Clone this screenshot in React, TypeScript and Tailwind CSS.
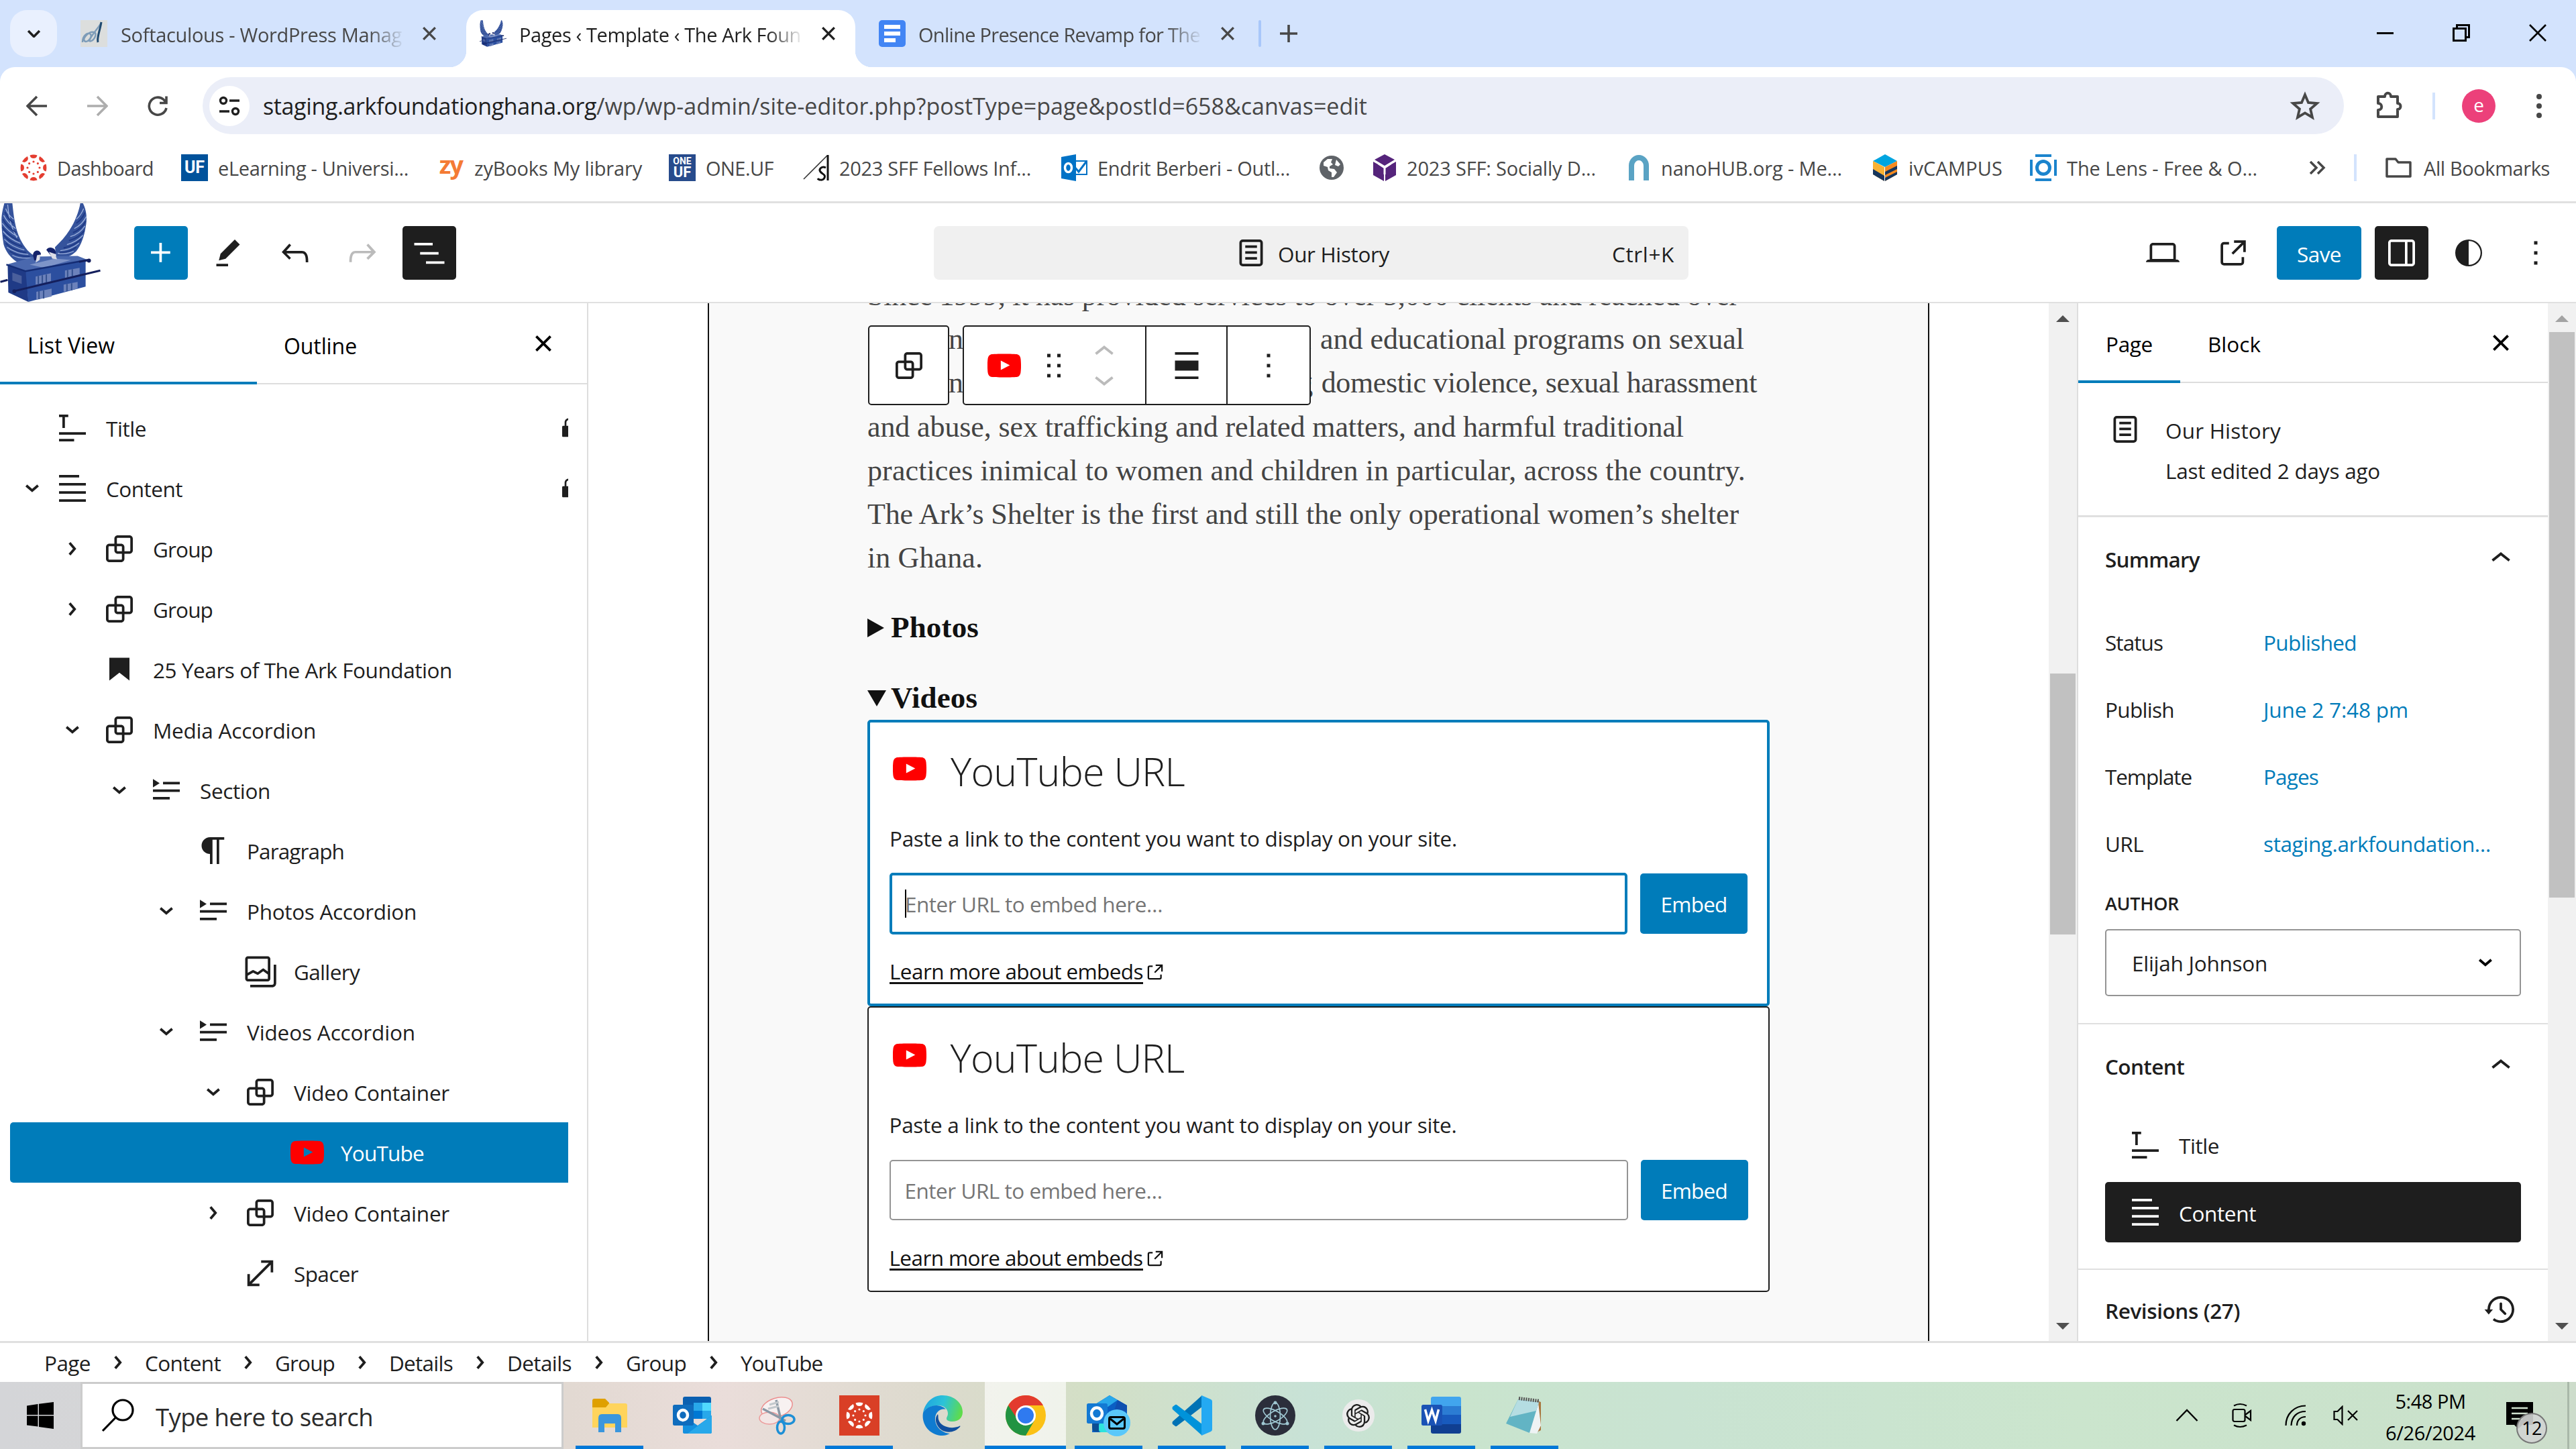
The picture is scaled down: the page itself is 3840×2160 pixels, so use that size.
import { useLayoutEffect, useRef, useState, type ReactNode } from "react";
import { SiOpenai } from "react-icons/si";

/* Text set to an exact measure: the tracking is worked out from the natural width. */
function Fit({ w, children, className = "", serif = false }: { w: number; children: string; className?: string; serif?: boolean }) {
  const ref = useRef<HTMLSpanElement>(null);
  const [ls, setLs] = useState(0);
  useLayoutEffect(() => {
    const el = ref.current;
    if (!el) return;
    const natural = el.getBoundingClientRect().width;
    setLs((w - natural) / children.length);
  }, [w, children]);
  return (
    <span className={"block shrink-0 whitespace-pre " + className} style={{ width: w }}>
      <span ref={ref} className={serif ? "inline-block" : "inline-block translate-y-px"} style={{ letterSpacing: ls }}>
        {children}
      </span>
    </span>
  );
}

const P = {
  plus: "M11 12.5V17.5H12.5V12.5H17.5V11H12.5V6H11V11H6V12.5H11Z",
  group:
    "M18 4h-7c-1.1 0-2 .9-2 2v3H6c-1.1 0-2 .9-2 2v7c0 1.1.9 2 2 2h7c1.1 0 2-.9 2-2v-3h3c1.1 0 2-.9 2-2V6c0-1.1-.9-2-2-2zm-4.5 14c0 .3-.2.5-.5.5H6c-.3 0-.5-.2-.5-.5v-7c0-.3.2-.5.5-.5h3V13c0 1.1.9 2 2 2h2.5v3zm0-4.5H11c-.3 0-.5-.2-.5-.5v-2.5H13c.3 0 .5.2.5.5v2.5zm5-.5c0 .3-.2.5-.5.5h-3V11c0-1.1-.9-2-2-2h-2.5V6c0-.3.2-.5.5-.5h7c.3 0 .5.2.5.5v7z",
  edit: "m19 7-3-3-8.5 8.5-1 4 4-1L19 7Zm-7 11.5H5V20h7v-1.5Z",
  undo: "M18.3 11.7c-.6-.6-1.4-.9-2.3-.9H6.7l2.9-3.3-1.1-1-4.5 5L8.5 16l1-1-2.7-2.7H16c.5 0 .9.2 1.3.5 1 1 1 3.4 1 4.5v.3h1.5v-.2c0-1.5 0-4.3-1.5-5.7z",
  redo: "M15.6 6.5l-1.1 1 2.9 3.3H8c-.9 0-1.7.3-2.3.9-1.4 1.5-1.4 4.2-1.4 5.6v.2h1.5v-.3c0-1.1 0-3.5 1-4.5.3-.3.7-.5 1.3-.5h9.2L14.5 15l1.1 1.1 4.6-4.6-4.6-5z",
  list: "M3 6h11v1.5H3V6Zm3.5 5.5h11V13h-11v-1.5ZM21 17H10v1.5h11V17Z",
  page: "M15.5 7.5h-7V9h7V7.5Zm-7 3.5h7v1.5h-7V11Zm7 3.5h-7V16h7v-1.5ZM17 4H7a2 2 0 0 0-2 2v12a2 2 0 0 0 2 2h10a2 2 0 0 0 2-2V6a2 2 0 0 0-2-2ZM7 5.5h10a.5.5 0 0 1 .5.5v12a.5.5 0 0 1-.5.5H7a.5.5 0 0 1-.5-.5V6a.5.5 0 0 1 .5-.5Z",
  desktop:
    "M20.5 16h-.7V8c0-1.1-.9-2-2-2H6.2c-1.1 0-2 .9-2 2v8h-.7c-.8 0-1.5.7-1.5 1.5h20c0-.8-.7-1.5-1.5-1.5zM5.7 8c0-.3.2-.5.5-.5h11.6c.3 0 .5.2.5.5v7.6H5.7V8z",
  external:
    "M19.5 4.5h-7V6h4.44l-5.97 5.97 1.06 1.06L18 7.06v4.44h1.5v-7Zm-13 1a2 2 0 0 0-2 2v10a2 2 0 0 0 2 2h10a2 2 0 0 0 2-2v-3H17v3a.5.5 0 0 1-.5.5h-10a.5.5 0 0 1-.5-.5v-10a.5.5 0 0 1 .5-.5h3V5.5h-3Z",
  drawer:
    "M18 4H6c-1.1 0-2 .9-2 2v12c0 1.1.9 2 2 2h12c1.1 0 2-.9 2-2V6c0-1.1-.9-2-2-2zm-4 14.5H6c-.3 0-.5-.2-.5-.5V6c0-.3.2-.5.5-.5h8v13zm4.5-.5c0 .3-.2.5-.5.5h-2.5v-13H18c.3 0 .5.2.5.5v12z",
  styles: "M20 12a8 8 0 1 1-16 0 8 8 0 0 1 16 0Zm-.9 0a7.1 7.1 0 0 1-7.1 7.1v-14.2a7.1 7.1 0 0 1 7.1 7.1Z",
  more: "M13 19h-2v-2h2v2zm0-6h-2v-2h2v2zm0-6h-2V5h2v2z",
  close:
    "M12 13.06l3.712 3.713 1.061-1.06L13.061 12l3.712-3.712-1.06-1.06L12 10.938 8.288 7.227l-1.061 1.06L10.939 12l-3.712 3.712 1.06 1.061L12 13.061z",
  title: "m4 5.5h2v6.5h1.5v-6.5h2v-1.5h-5.5zm16 10.5h-16v-1.5h16zm-7 4h-9v-1.5h9z",
  content: "M4 20h16v-1.5H4V20zm0-4.8h16v-1.5H4v1.5zm0-6.4v1.5h16V8.8H4zM16 4H4v1.5h12V4z",
  heading: "M6 5V18.6L12 13.85L18 18.6V5H6Z",
  details: "M4 16h10v1.5H4V16Zm0-4.5h16V13H4v-1.5ZM10 7h10v1.5H10V7ZM4 5.25l4 2.5-4 2.5v-5Z",
  paragraph:
    "m9.99609 14v-.2251l.00391.0001v6.225h1.5v-14.5h2.5v14.5h1.5v-14.5h3v-1.5h-8.50391c-2.76142 0-5 2.23858-5 5 0 2.7614 2.23858 5 5 5z",
  gallery:
    "M16.375 4.5H4.625a.125.125 0 0 0-.125.125v8.254l2.859-1.54a.75.75 0 0 1 .68-.016l2.384 1.142 2.89-2.074a.75.75 0 0 1 .874 0l2.313 1.66V4.625a.125.125 0 0 0-.125-.125Zm.125 9.398-2.75-1.975-2.813 2.02a.75.75 0 0 1-.76.067l-2.444-1.17L4.5 14.583v1.792c0 .069.056.125.125.125h11.75a.125.125 0 0 0 .125-.125v-2.477ZM4.625 3C3.728 3 3 3.728 3 4.625v11.75C3 17.273 3.728 18 4.625 18h11.75c.898 0 1.625-.727 1.625-1.625V4.625C18 3.728 17.273 3 16.375 3H4.625ZM20 8v11c0 .69-.31 1-.999 1H6v1.5h13.001c1.52 0 2.499-.982 2.499-2.5V8H20Z",
  spacer: "M12.5 4.3v1.5h4.6L5.8 17.1V12.5H4.3v7.2h7.2v-1.5H6.9L18.2 6.9v4.6h1.5V4.3z",
  lock: "M17 10h-1.2V7c0-2.1-1.7-3.8-3.8-3.8-2.1 0-3.8 1.7-3.8 3.8v3H7c-.6 0-1 .4-1 1v8c0 .6.4 1 1 1h10c.6 0 1-.4 1-1v-8c0-.6-.4-1-1-1zm-2.8 0H9.8V7c0-1.2 1-2.2 2.2-2.2s2.2 1 2.2 2.2v3z",
  youtube:
    "M21.8 8s-.195-1.377-.795-1.984c-.76-.797-1.613-.8-2.004-.847-2.798-.203-6.996-.203-6.996-.203h-.01s-4.197 0-6.996.202c-.39.046-1.242.05-2.003.846C2.395 6.623 2.2 8 2.2 8S2 9.62 2 11.24v1.517c0 1.618.2 3.237.2 3.237s.195 1.378.795 1.985c.76.797 1.76.77 2.205.855 1.6.153 6.8.2 6.8.2s4.203-.005 7-.208c.392-.047 1.244-.05 2.005-.847.6-.607.795-1.985.795-1.985s.2-1.618.2-3.237v-1.517C22 9.62 21.8 8 21.8 8zM9.935 14.595v-5.62l5.403 2.82-5.403 2.8z",
  drag: "M8 7h2V5H8v2zm0 6h2v-2H8v2zm0 6h2v-2H8v2zm6-14v2h2V5h-2zm0 8h2v-2h-2v2zm0 6h2v-2h-2v2z",
  up: "M6.5 12.4L12 8l5.5 4.4-.9 1.2L12 10l-4.5 3.6-1-1.2z",
  down: "M17.5 11.6L12 16l-5.5-4.4.9-1.2L12 14l4.5-3.6 1 1.2z",
  right:
    "M10.8622 8.04053L14.2805 12.0286L10.8622 16.0167L9.72327 15.0405L12.3049 12.0286L9.72327 9.01672L10.8622 8.04053Z",
  align: "M19 5.5H5V4h14v1.5ZM19 20H5v-1.5h14V20ZM5 9h14v6H5V9Z",
  history:
    "M5.5 12h1.75l-2.5 3-2.5-3H4a8 8 0 113.134 6.35l.907-1.194A6.5 6.5 0 105.5 12zm9.53 1.97l-2.28-2.28V8.5a.75.75 0 00-1.5 0V12a.747.747 0 00.218.529l2.502 2.502a.75.75 0 101.06-1.061z",
};

function Ic({ n, className = "size-[60px]" }: { n: keyof typeof P; className?: string }) {
  return (
    <svg viewBox="0 0 24 24" className={"shrink-0 fill-current " + className}>
      <path fillRule="evenodd" d={P[n]} />
    </svg>
  );
}

function Sv({ vb, className = "", children }: { vb: string; className?: string; children: ReactNode }) {
  return (
    <svg viewBox={vb} fill="none" className={"shrink-0 " + className}>
      {children}
    </svg>
  );
}

const leftWing = "M6 0C4 8 1 18 2 30C2 44 4 54 5 62C8 72 14 80 22 86C30 92 42 91 52 90L54 80C44 76 36 66 30 54C22 38 20 18 18 0Z";
const rightWing = "M120 0C118 12 112 28 104 40C98 50 90 58 82 66L84 82C94 84 106 80 114 72C122 62 126 48 128 36C131 22 129 10 124 0Z";

function Ark({ className }: { className: string }) {
  return (
    <Sv vb="0 0 150 148" className={className}>
      <path d={leftWing} fill="#35539c" />
      <path d={rightWing} fill="#35539c" />
      <g stroke="#9fb2dd" strokeWidth="1.300">
        <path d="M8 8q4 10 12 16M5 18q6 12 18 20M3 30q8 12 23 20M4 42q10 12 26 18M6 54q12 12 30 16M10 66q14 10 32 11M18 78q12 6 30 4M11 2q2 30 14 50" />
        <path d="M125 8q-4 10-11 16M129 20q-6 12-18 18M127 34q-8 12-22 16M124 48q-10 10-24 14M118 60q-12 10-28 11M110 72q-10 5-24 3" />
      </g>
      <g stroke="#1f3a86" strokeWidth="2">
        <path d="M7 13q4 10 13 17M4 24q6 12 20 20M3 36q8 12 25 20M5 48q10 12 28 17M8 60q12 12 31 14M14 72q12 8 30 8" />
        <path d="M127 14q-4 10-13 16M128 27q-6 12-19 17M126 41q-8 11-23 15M121 54q-10 10-26 13M114 66q-10 8-25 8" />
      </g>
      <path d="M9 92L52 80L116 79L134 86L72 104L38 102Z" fill="#4a68ae" />
      <path d="M44 92l38-9 24 2-40 12z" fill="#7e94c8" />
      <path d="M11 93L40 102L42 148L12 134Z" fill="#1f3a86" />
      <path d="M38 102L128 85V125L42 148Z" fill="#2c4f9f" />
      <path d="M9 92L38 102L131 85" stroke="#142c74" strokeWidth="2.500" />
      <path d="M18 104l14 5v12l-14-5z" fill="#4a5f9c" />
      <path d="M53 110l23-5v12l-23 5zM97 101l22-4v10l-22 5zM54 133l23-5v12l-23 5zM95 122l21-4v10l-21 5z" fill="#6c82bb" />
      <path d="M57 109v12M63 108v12M69 107v12M101 100v11M108 99v11M58 132v12M65 131v12M100 121v11M107 120v11" stroke="#33508f" strokeWidth="2" />
      <path d="M0 118L11 115M20 132L150 101M118 88L133 85" stroke="#141f5c" strokeWidth="3" />
      <circle cx="133" cy="86" r="3" fill="#141f5c" />
      <circle cx="21" cy="132" r="3" fill="#141f5c" />
      <path d="M49 78c0-8 10-10 12-2l-4 8-6 2zM69 70c4-7 16-3 14 6l-6 4z" fill="#15236b" />
      <path d="M55 78l5-1-1 8-6 4zM73 73l9 3 3 8-7-1z" fill="#dcdde6" />
    </Sv>
  );
}

function X({ className = "size-[22px]" }: { className?: string }) {
  return (
    <Sv vb="0 0 20 20" className={className}>
      <path d="M2 2L18 18M18 2L2 18" stroke="currentColor" strokeWidth="3" />
    </Sv>
  );
}

function TabTitle({ w, children }: { w: number; children: string }) {
  return (
    <div className="w-[420px] shrink-0 [mask-image:linear-gradient(to_right,black_88%,transparent_101%)]">
      <Fit w={w} className="pt-[2px]">{children}</Fit>
    </div>
  );
}

function TabStrip() {
  return (
    <div className="flex h-[100px] items-start bg-[#d3e3fd] pl-[15px] pt-[15px] text-[29px] leading-[70px]">
      <div className="flex size-[70px] items-center justify-center rounded-[25px] bg-[#e9f0fe]">
        <Sv vb="0 0 20 12" className="w-[21px] text-[#1f1f1f]">
          <path d="M2 2l8 8 8-8" stroke="currentColor" strokeWidth="3.4" />
        </Sv>
      </div>
      <div className="flex h-[70px] w-[610px] items-center pl-[35px] text-[#474747]">
        <Sv vb="0 0 40 40" className="size-[40px]">
          <rect width="40" height="40" fill="#dcdedd" />
          <path d="M3 33C3 22 12 17 15 21S10 35 6 31 13 16 20 18 18 34 13 31C17 20 29 10 31 3" stroke="#7d9cb8" strokeWidth="2.500" />
          <path d="M31 3C29 16 24 26 26 33" stroke="#1f4a70" strokeWidth="3" />
        </Sv>
        <div className="w-[20px]" />
        <TabTitle w={419}>Softaculous - WordPress Manag</TabTitle>
        <X className="ml-[29px] size-[22px]" />
      </div>
      <div className="flex h-[85px] items-end">
        <div className="size-[25px] -ml-[25px] bg-white [mask-image:radial-gradient(circle_at_0_0,transparent_25px,black_25.5px)]" />
        <div className="flex h-[85px] w-[580px] items-start rounded-t-[25px] bg-white pl-[20px] text-[#1f1f1f]">
          <div className="flex h-[70px] items-center">
            <Ark className="size-[40px]" />
            <div className="w-[19px]" />
            <TabTitle w={420}>Pages ‹ Template ‹ The Ark Foun</TabTitle>
            <X className="ml-[30px] size-[22px]" />
          </div>
        </div>
        <div className="size-[25px] bg-white [mask-image:radial-gradient(circle_at_100%_0,transparent_25px,black_25.5px)]" />
      </div>
      <div className="flex h-[70px] items-center pl-[10px] text-[#474747]">
        <Sv vb="0 0 40 40" className="size-[40px]">
          <rect width="40" height="40" rx="5" fill="#4285f4" />
          <path d="M8 10h24M8 20h24M8 30h17" stroke="white" strokeWidth="6" />
        </Sv>
        <div className="w-[19px]" />
        <TabTitle w={420}>Online Presence Revamp for The</TabTitle>
        <X className="ml-[30px] size-[22px]" />
        <div className="ml-[35px] h-[40px] w-[4px] rounded bg-[#a8c7fa]" />
        <Sv vb="0 0 26 26" className="ml-[28px] size-[26px]">
          <path d="M13 0v26M0 13h26" stroke="currentColor" strokeWidth="3.6" />
        </Sv>
      </div>
      <div className="ml-auto flex h-[68px] items-center gap-[88px] pr-[44px] text-black">
        <div className="h-[3px] w-[25px] bg-black" />
        <Sv vb="0 0 26 26" className="size-[26px]">
          <path d="M1.5 6.5h18v18h-18zM6.5 6V1.500h18v18H20" stroke="currentColor" strokeWidth="3" />
        </Sv>
        <Sv vb="0 0 26 26" className="size-[26px]">
          <path d="M1 1l24 24M25 1L1 25" stroke="currentColor" strokeWidth="2.6" />
        </Sv>
      </div>
    </div>
  );
}

function AddressBar() {
  return (
    <div className="h-[100px] bg-[#d3e3fd]">
      <div className="flex h-[100px] items-center rounded-t-[22px] bg-white pt-[15px] text-[#474747]">
        <Sv vb="0 0 32 32" className="ml-[39px] size-[32px]">
          <path d="M31 16H3M16 2L2 16l14 14" stroke="currentColor" strokeWidth="3.6" />
        </Sv>
        <Sv vb="0 0 32 32" className="ml-[58px] size-[32px] text-[#adadad]">
          <path d="M1 16h28M16 2l14 14-14 14" stroke="currentColor" strokeWidth="3.6" />
        </Sv>
        <Sv vb="0 0 32 32" className="ml-[58px] size-[32px]">
          <path d="M29 19a13 13 0 1 1-4-12.500L29 11M29 1.500V11.500H19" stroke="currentColor" strokeWidth="3.6" />
        </Sv>
        <div className="ml-[51px] flex h-[85px] w-[3192px] items-center rounded-full bg-[#ebeef8]">
          <div className="ml-[10px] flex size-[60px] items-center justify-center rounded-full bg-white">
            <Sv vb="0 0 32 32" className="size-[32px] text-[#1f1f1f]">
              <circle cx="7" cy="8" r="4.500" stroke="currentColor" strokeWidth="3.4" />
              <circle cx="25" cy="24" r="4.500" stroke="currentColor" strokeWidth="3.4" />
              <path d="M16 8h15M1 24h15" stroke="currentColor" strokeWidth="3.600" />
            </Sv>
          </div>
          <div className="-mt-[2px] ml-[20px] flex text-[34px] leading-[60px]">
            <Fit w={497} className="text-[#1f1f1f]">staging.arkfoundationghana.org</Fit>
            <Fit w={1149}>/wp/wp-admin/site-editor.php?postType=page&amp;postId=658&amp;canvas=edit</Fit>
          </div>
          <Sv vb="0 0 24 24" className="ml-auto mr-[34px] size-[48px]">
            <path d="M12 3.600l2.500 5.900 6.400.55-4.850 4.200 1.450 6.250L12 17.200l-5.500 3.300 1.450-6.250L3.100 10.050l6.400-.55z" stroke="currentColor" strokeWidth="1.900" />
          </Sv>
        </div>
        <Sv vb="0 0 44 44" className="-mt-[3px] ml-[45px] size-[44px]">
          <path d="M6 10h10c0-7 9-7 9 0h10v10c6 0 6 9 0 9v11H6V30c7 0 7-10 0-10z" stroke="currentColor" strokeWidth="4" strokeLinejoin="round" />
        </Sv>
        <div className="ml-[43px] h-[40px] w-[4px] bg-[#d3e3fd]" />
        <div className="ml-[40px] flex size-[50px] items-center justify-center rounded-full bg-[#ec407a] pb-[4px] text-[28px] text-white">e</div>
        <Sv vb="0 0 12 40" className="ml-[59px] h-[40px] w-[12px]">
          <circle cx="6" cy="6" r="4" fill="currentColor" />
          <circle cx="6" cy="20" r="4" fill="currentColor" />
          <circle cx="6" cy="34" r="4" fill="currentColor" />
        </Sv>
      </div>
    </div>
  );
}

function CanvasLogo({ className, color }: { className: string; color: string }) {
  return (
    <Sv vb="0 0 40 40" className={className}>
      {[0, 45, 90, 135, 180, 225, 270, 315].map((a) => (
        <g key={a} transform={`rotate(${a} 20 20)`} fill={color}>
          <path d="M14.500 1.400a20 20 0 0 1 11 0a5.600 5.600 0 0 1-11 0z" />
          <circle cx="20" cy="11" r="1.600" />
        </g>
      ))}
    </Sv>
  );
}

function Mark({ icon, gap, w, children }: { icon: ReactNode; gap: string; w: number; children: string }) {
  return (
    <div className={"flex items-center " + gap}>
      {icon}
      <Fit w={w} className="ml-[15px] mr-[1px]">{children}</Fit>
    </div>
  );
}

function Bookmarks() {
  return (
    <div className="flex h-[100px] items-center bg-white text-[29px] leading-[48px] text-[#474747]">
      <Mark gap="ml-[30px]" w={144} icon={<CanvasLogo className="size-[40px]" color="#e43d30" />}>Dashboard</Mark>
      <Mark gap="ml-[40px]" w={284} icon={<div className="flex size-[40px] items-center justify-center bg-[#00529b] font-['Roboto',sans-serif] text-[25px] font-bold text-white">UF</div>}>eLearning - Universi...</Mark>
      <Mark gap="ml-[42px]" w={250} icon={<div className="flex size-[40px] items-center justify-center pb-[8px] text-[36px] font-bold tracking-tighter text-[#f47b35]">zy</div>}>zyBooks My library</Mark>
      <Mark gap="ml-[39px]" w={101} icon={<div className="flex size-[40px] flex-col items-center justify-center bg-[#274b8c] font-['Roboto',sans-serif] font-bold text-white"><span className="text-[14px] leading-[14px]">ONE</span><span className="text-[22px] leading-[20px]">UF</span></div>}>ONE.UF</Mark>
      <Mark gap="ml-[42px]" w={286} icon={
        <Sv vb="0 0 40 40" className="size-[40px]">
          <path d="M2 37L37 2" stroke="#333" strokeWidth="1.600" />
          <path d="M38 1v38" stroke="#111" strokeWidth="3" />
          <path d="M35 20c-6-3-11 2-8 6s8 4 6 9-9 3-10 1" stroke="#111" strokeWidth="3" />
        </Sv>}>2023 SFF Fellows Inf...</Mark>
      <Mark gap="ml-[43px]" w={287} icon={
        <Sv vb="0 0 40 40" className="size-[40px]">
          <path d="M18 10h21v20H18z" fill="white" stroke="#0072c6" strokeWidth="2" />
          <path d="M20 18l7 8 12-16" stroke="#0072c6" strokeWidth="3" />
          <path d="M1 4l22-4v40L1 36z" fill="#0072c6" />
          <ellipse cx="11.500" cy="20" rx="5" ry="6.500" stroke="white" strokeWidth="3.500" />
        </Sv>}>Endrit Berberi - Outl...</Mark>
      <Sv vb="0 0 40 40" className="ml-[41px] size-[40px]">
        <circle cx="20" cy="20" r="18" fill="#5f6368" />
        <path d="M8 12l6-5 7 0-2 5 3 3-5 3 0 3 7 1 4 5-5 7-3 0 0-7-5-3-1-5-6-2z" fill="#fff" />
        <path d="M27 8l6 7-3 3-5-2z" fill="#fff" />
      </Sv>
      <Mark gap="ml-[41px]" w={282} icon={
        <Sv vb="0 0 36 40" className="h-[40px] w-[36px]">
          <path d="M18 0l15 8-15 9L3 8z" fill="#55247b" />
          <path d="M1 11l16 9v20L1 31zM35 11l-16 9v20l16-9z" fill="#55247b" />
          <path d="M9 14l9 6 9-6M18 20v10" stroke="#fff" strokeWidth="3" />
        </Sv>}>2023 SFF: Socially D...</Mark>
      <Mark gap="ml-[45px]" w={270} icon={
        <Sv vb="0 0 36 40" className="h-[40px] w-[36px]">
          <path d="M7 39V17a11 12 0 0 1 22 0v22" stroke="#5aa3c4" strokeWidth="8" />
        </Sv>}>nanoHUB.org - Me...</Mark>
      <Mark gap="ml-[43px]" w={140} icon={
        <Sv vb="0 0 40 40" className="size-[40px]">
          <path d="M20 0l18 10-18 9L2 10z" fill="#00a5e0" />
          <path d="M2 10l17 9v21L2 30z" fill="#f9b233" />
          <path d="M2 22l17 10v8L2 30z" fill="#17365c" />
          <path d="M38 10l-18 9v21l18-10z" fill="#f68a1f" />
          <path d="M38 17l-18 9v5l18-9zM38 26l-18 9v5l18-10z" fill="#17365c" />
        </Sv>}>ivCAMPUS</Mark>
      <Mark gap="ml-[40px]" w={284} icon={
        <Sv vb="0 0 40 40" className="size-[40px]">
          <circle cx="20" cy="20" r="9.500" stroke="#1b84cd" strokeWidth="5" />
          <path d="M8 2h24M8 38h24M2 8v24M38 8v24" stroke="#1b84cd" strokeWidth="4" />
        </Sv>}>The Lens - Free &amp; O...</Mark>
      <Sv vb="0 0 26 20" className="ml-[75px] h-[20px] w-[26px]">
        <path d="M3 1l9 9-9 9M14 1l9 9-9 9" stroke="currentColor" strokeWidth="3.500" />
      </Sv>
      <div className="ml-[42px] h-[40px] w-[4px] bg-[#d3e3fd]" />
      <Mark gap="ml-[41px]" w={188} icon={
        <Sv vb="0 0 44 40" className="h-[40px] w-[44px]">
          <path d="M4 7h13l4 5h18v21H4z" stroke="currentColor" strokeWidth="3.500" strokeLinejoin="round" />
        </Sv>}>All Bookmarks</Mark>
    </div>
  );
}

function EditorHeader() {
  return (
    <div className="flex h-[152px] items-center border-b-2 border-t-[3px] border-[#e0e0e0] bg-white text-[31.500px] text-[#1e1e1e]">
      <Ark className="h-[147px] w-[150px]" />
      <div className="ml-[50px] flex size-[80px] items-center justify-center rounded-[5px] bg-[#007cba] text-white"><Ic n="plus" /></div>
      <div className="ml-[20px] flex size-[80px] items-center justify-center"><Ic n="edit" /></div>
      <div className="ml-[20px] flex size-[80px] items-center justify-center"><Ic n="undo" /></div>
      <div className="ml-[20px] flex size-[80px] items-center justify-center text-[#bbb]"><Ic n="redo" /></div>
      <div className="ml-[20px] flex size-[80px] items-center justify-center rounded-[5px] bg-[#1e1e1e] text-white"><Ic n="list" /></div>
      <div className="ml-[712px] flex h-[80px] w-[1125px] items-center rounded-[8px] bg-[#f0f0f0]">
        <Ic n="page" className="ml-[443px] size-[60px]" />
        <Fit w={166} className="ml-[10px] pt-[2px]">Our History</Fit>
        <Fit w={93} className="ml-auto mr-[21px] pt-[2px]">Ctrl+K</Fit>
      </div>
      <Ic n="desktop" className="ml-[677px] size-[60px]" />
      <Ic n="external" className="ml-[45px] size-[60px]" />
      <div className="ml-[35px] flex h-[80px] w-[126px] items-center justify-center rounded-[5px] bg-[#007cba] text-white"><Fit w={66} className="pt-[2px]">Save</Fit></div>
      <div className="ml-[20px] flex size-[80px] items-center justify-center rounded-[5px] bg-[#1e1e1e] text-white"><Ic n="drawer" /></div>
      <Ic n="styles" className="ml-[30px] size-[60px]" />
      <Ic n="more" className="ml-[40px] size-[60px]" />
    </div>
  );
}

type Row = { t: string; w: number; d: number; i: keyof typeof P; c?: "open" | "shut"; lock?: boolean; sel?: boolean };
const rows: Row[] = [
  { t: "Title", w: 60, d: 0, i: "title", lock: true },
  { t: "Content", w: 114, d: 0, i: "content", c: "open", lock: true },
  { t: "Group", w: 89, d: 1, i: "group", c: "shut" },
  { t: "Group", w: 89, d: 1, i: "group", c: "shut" },
  { t: "25 Years of The Ark Foundation", w: 446, d: 1, i: "heading" },
  { t: "Media Accordion", w: 243, d: 1, i: "group", c: "open" },
  { t: "Section", w: 105, d: 2, i: "details", c: "open" },
  { t: "Paragraph", w: 145, d: 3, i: "paragraph" },
  { t: "Photos Accordion", w: 253, d: 3, i: "details", c: "open" },
  { t: "Gallery", w: 98, d: 4, i: "gallery" },
  { t: "Videos Accordion", w: 251, d: 3, i: "details", c: "open" },
  { t: "Video Container", w: 232, d: 4, i: "group", c: "open" },
  { t: "YouTube", w: 124, d: 5, i: "youtube", sel: true },
  { t: "Video Container", w: 232, d: 4, i: "group", c: "shut" },
  { t: "Spacer", w: 96, d: 4, i: "spacer" },
];

function ListView() {
  return (
    <div className="flex h-full w-[877px] shrink-0 flex-col border-r-[2px] border-[#ddd] bg-white text-[#1e1e1e]">
      <div className="flex h-[121px] items-center border-b-2 border-[#ddd] text-[32px] font-medium text-black">
        <div className="mb-[-2px] flex h-[121px] w-[383px] items-center border-b-4 border-[#007cba] pl-[41px] pt-[7px]"><Fit w={130}>List View</Fit></div>
        <div className="pl-[40px] pt-[6px]"><Fit w={109}>Outline</Fit></div>
        <Ic n="close" className="ml-auto mr-[35px] size-[60px]" />
      </div>
      <div className="flex flex-col pl-[15px] pr-[28px] pt-[20px] text-[31.500px]">
        {rows.map((r, k) => (
          <div
            key={k}
            className={"flex h-[90px] w-[832px] items-center overflow-hidden " + (r.sel ? "rounded-l-[5px] bg-[#007cba] text-white" : "")}
          >
            <div className="flex shrink-0 justify-start" style={{ width: 63 + 70 * r.d, paddingLeft: r.d === 0 ? 3 : 70 * r.d - 7 }}>
              {r.c === "open" && <Ic n="right" className="size-[60px] rotate-90" />}
              {r.c === "shut" && <Ic n="right" />}
            </div>
            <Ic n={r.i} className={r.sel ? "size-[60px] text-[#f00]" : "size-[60px]"} />
            <Fit w={r.w} className={r.sel ? "ml-[20px] font-medium" : "ml-[20px]"}>{r.t}</Fit>
            {r.lock && <Ic n="lock" className="-mr-[21px] ml-auto size-[40px]" />}
          </div>
        ))}
      </div>
    </div>
  );
}

function EmbedBlock({ active = false }: { active?: boolean }) {
  return (
    <div
      className={
        "w-[1345px] rounded-[5px] bg-white text-[31.500px] leading-[44px] text-[#1e1e1e] " +
        (active ? "h-[427px] border-4 border-[#007cba] p-[29px] pt-[38px]" : "h-[426px] border-[2.500px] border-[#1e1e1e] p-[30.500px] pt-[39.500px]")
      }
    >
      <div className="flex h-[70px] items-center">
        <Ic n="youtube" className="mb-[8px] size-[60px] text-[#f00]" />
        <Fit w={349} className="-mt-[4px] ml-[31px] text-[59px] font-[350] leading-[70px]">YouTube URL</Fit>
      </div>
      <Fit w={846} className="mt-[42px]">Paste a link to the content you want to display on your site.</Fit>
      <div className="mt-[30px] flex h-[92px] items-center">
        <div
          className={
            "flex w-[1101px] items-center rounded-[5px] bg-white text-[#757575] " +
            (active ? "h-[92px] border-4 border-[#007cba] pl-[19px]" : "h-[90px] border-[2.500px] border-[#949494] pl-[21px]")
          }
        >
          {active && <div className="h-[42px] w-[2px] bg-black" />}
          <Fit w={384} className={active ? "-ml-[2px]" : ""}>Enter URL to embed here…</Fit>
        </div>
        <div className="ml-[19px] flex h-[90px] w-[160px] items-center justify-center rounded-[5px] bg-[#007cba] text-white"><Fit w={99}>Embed</Fit></div>
      </div>
      <div className="mt-[32px] flex items-center text-[#111]">
        <div className="h-[42px] border-b-[3px] border-[#111]"><Fit w={378}>Learn more about embeds</Fit></div>
        <Ic n="external" className="mt-[6px] size-[36px]" />
      </div>
    </div>
  );
}

function BlockToolbar() {
  return (
    <div className="absolute left-[237px] top-[33px] flex gap-[20px] text-[#1e1e1e]">
      <div className="flex h-[119px] w-[121px] items-center justify-center rounded-[5px] border-[2.500px] border-[#1e1e1e] bg-white"><Ic n="group" /></div>
      <div className="flex h-[119px] w-[519px] rounded-[5px] border-[2.500px] border-[#1e1e1e] bg-white">
        <div className="flex w-[272px] items-center border-r-[2.500px] border-[#1e1e1e] pl-[30px]">
          <Ic n="youtube" className="size-[60px] text-[#f00]" />
          <Ic n="drag" className="ml-[14px] size-[60px]" />
          <div className="ml-[15px] flex flex-col items-center text-[#bbb]">
            <Ic n="up" className="-mb-[20px] size-[60px]" />
            <Ic n="down" className="size-[60px]" />
          </div>
        </div>
        <div className="flex w-[121px] items-center justify-center border-r-[2.500px] border-[#1e1e1e]"><Ic n="align" /></div>
        <div className="flex w-[121px] items-center justify-center"><Ic n="more" /></div>
      </div>
    </div>
  );
}

function Canvas() {
  return (
    <div className="flex h-full min-w-0 flex-1 justify-between bg-white pl-[178px]">
      <div className="relative flex h-full w-[1821px] flex-col overflow-hidden border-x-[2.500px] border-[#111] bg-[#f9f9f9] pl-[236px] font-['Liberation_Serif',serif]">
        <div className="-mt-[44px] text-[44px] leading-[65.200px] text-[#444]">
          <Fit serif w={1299}>Since 1999, it has provided services to over 5,000 clients and reached over</Fit>
          <div className="flex"><Fit serif w={121}>commu</Fit><Fit serif w={543}>nities through sensitization</Fit><Fit serif w={643}> and educational programs on sexual</Fit></div>
          <div className="flex"><Fit serif w={121}>and ge</Fit><Fit serif w={545}>nder-based issues, including</Fit><Fit serif w={660}> domestic violence, sexual harassment</Fit></div>
          <Fit serif w={1217}>and abuse, sex trafficking and related matters, and harmful traditional</Fit>
          <Fit serif w={1309}>practices inimical to women and children in particular, across the country.</Fit>
          <Fit serif w={1299}>The Ark’s Shelter is the first and still the only operational women’s shelter</Fit>
          <Fit serif w={172}>in Ghana.</Fit>
        </div>
        <div className="mt-[39px] flex h-[65px] items-center text-[45px] font-bold leading-[65px] text-[#111]">
          <Sv vb="0 0 25 28" className="h-[28px] w-[25px]"><path d="M0 0l25 14-25 14z" fill="#111" /></Sv>
          <Fit serif w={131} className="ml-[10px]">Photos</Fit>
        </div>
        <div className="mt-[40px] flex h-[65px] items-center text-[45px] font-bold leading-[65px] text-[#111]">
          <Sv vb="0 0 28 24" className="h-[24px] w-[28px]"><path d="M0 0h28L14 24z" fill="#111" /></Sv>
          <Fit serif w={129} className="ml-[7px]">Videos</Fit>
        </div>
        <div className="font-['Open_Sans',sans-serif]">
          <EmbedBlock active />
          <EmbedBlock />
        </div>
        <div className="font-['Open_Sans',sans-serif]"><BlockToolbar /></div>
      </div>
      <ScrollBar kind="canvas" />
    </div>
  );
}

function ScrollBar({ kind }: { kind: "canvas" | "page" }) {
  return (
    <div className="flex h-full w-[42px] shrink-0 flex-col items-center bg-[#f1f1f1]">
      <Sv vb="0 0 20 10" className={"mt-[18px] h-[10px] w-[20px] " + (kind === "page" ? "text-[#a3a3a3]" : "text-[#505050]")}>
        <path d="M0 10L10 0l10 10z" fill="currentColor" />
      </Sv>
      <div className={"w-[38px] bg-[#c1c1c1] " + (kind === "page" ? "mt-[15px] h-[843px]" : "mt-[524px] h-[389px]")} />
      <Sv vb="0 0 20 10" className="mb-[17px] mt-auto h-[10px] w-[20px] text-[#505050]">
        <path d="M0 0l10 10L20 0z" fill="currentColor" />
      </Sv>
    </div>
  );
}

const facts: [string, number, string, number][] = [
  ["Status", 86, "Published", 139],
  ["Publish", 103, "June 2 7:48 pm", 216],
  ["Template", 129, "Pages", 82],
  ["URL", 57, "staging.arkfoundation…", 339],
];

function Inspector() {
  return (
    <div className="flex h-full w-[702px] shrink-0 flex-col overflow-hidden border-l-2 border-[#ddd] bg-white text-[31.500px] leading-[50px] text-[#1e1e1e]">
      <div className="flex h-[119px] shrink-0 items-center border-b-2 border-[#ddd] font-medium text-black">
        <div className="mb-[-2px] flex h-[119px] w-[152px] items-center border-b-4 border-[#007cba] pl-[41px] pt-[5px]"><Fit w={70}>Page</Fit></div>
        <div className="pl-[41px] pt-[3px]"><Fit w={79}>Block</Fit></div>
        <Ic n="close" className="ml-auto mr-[40px] size-[60px]" />
      </div>
      <div className="flex h-[200px] shrink-0 border-b-[3px] border-[#e0e0e0] pl-[40px] pt-[39px]">
        <Ic n="page" />
        <div className="ml-[30px] pt-[6px]">
          <Fit w={172} className="font-medium">Our History</Fit>
          <Fit w={320} className="mt-[10px]">Last edited 2 days ago</Fit>
        </div>
      </div>
      <div className="flex h-[756px] shrink-0 flex-col border-b-2 border-[#e0e0e0] pl-[40px] pt-[37px]">
        <div className="flex h-[50px] items-center">
          <Fit w={141} className="font-semibold">Summary</Fit>
          <Ic n="up" className="ml-auto mr-[40px] size-[60px]" />
        </div>
        <div className="mt-[74px] flex flex-col gap-[50px]">
          {facts.map(([a, wa, b, wb]) => (
            <div key={a} className="flex h-[50px]">
              <div className="w-[236px]"><Fit w={wa}>{a}</Fit></div>
              <Fit w={wb} className="text-[#007cba]">{b}</Fit>
            </div>
          ))}
        </div>
        <Fit w={110} className="mt-[39px] text-[27px] font-semibold">AUTHOR</Fit>
        <div className="mt-[14px] flex h-[100px] w-[620px] items-center rounded-[5px] border-[2.500px] border-[#949494] pl-[38px]">
          <Fit w={202}>Elijah Johnson</Fit>
          <Ic n="right" className="ml-auto mr-[21px] size-[60px] rotate-90 text-black" />
        </div>
      </div>
      <div className="flex h-[366px] shrink-0 flex-col border-b-2 border-[#e0e0e0] pl-[40px] pt-[37px]">
        <div className="flex h-[50px] items-center">
          <Fit w={118} className="font-semibold">Content</Fit>
          <Ic n="up" className="ml-auto mr-[40px] size-[60px]" />
        </div>
        <div className="mt-[48px] flex h-[90px] items-center pl-[30px]">
          <Ic n="title" />
          <Fit w={60} className="ml-[20px]">Title</Fit>
        </div>
        <div className="mt-[10px] flex h-[90px] w-[620px] items-center rounded-[5px] bg-[#1e1e1e] pl-[30px] text-white">
          <Ic n="content" />
          <Fit w={115} className="ml-[20px] pt-[2px]">Content</Fit>
        </div>
      </div>
      <div className="flex h-[118px] shrink-0 items-center pl-[40px]">
        <Fit w={201} className="pt-[2px] font-semibold">Revisions (27)</Fit>
        <Ic n="history" className="ml-auto mr-[40px] size-[60px]" />
      </div>
    </div>
  );
}

const crumbs: [string, number][] = [["Page", 69], ["Content", 113], ["Group", 89], ["Details", 95], ["Details", 96], ["Group", 90], ["YouTube", 122]];

function Crumbs() {
  return (
    <div className="flex h-[61px] items-center border-t-[3px] border-[#e0e0e0] bg-white pl-[66px] text-[31.500px] text-[#1e1e1e]">
      {crumbs.map(([t, w], i) => (
        <div key={i} className="flex items-center">
          {i > 0 && <Ic n="right" className="mx-[10.500px] size-[60px]" />}
          <Fit w={w}>{t}</Fit>
        </div>
      ))}
    </div>
  );
}

function Slot({ children, run = false, on = false }: { children: ReactNode; run?: boolean; on?: boolean }) {
  return (
    <div className="flex h-[100px] w-[124px] shrink-0 flex-col items-center justify-between">
      <div className={"flex h-[95px] items-center justify-center pt-[5px] " + (on ? "w-[121px] bg-white/65" : "w-[121px]")}>{children}</div>
      {run && <div className={on ? "h-[5px] w-[121px] bg-[#0078d7]" : "h-[5px] w-[101px] bg-[#0078d7]"} />}
    </div>
  );
}

function Taskbar() {
  return (
    <div className="flex h-[100px] items-center bg-[linear-gradient(90deg,#d4d5d8_0px,#d7d6d5_500px,#e2d9d2_850px,#eaddda_1080px,#dcdacd_1400px,#d3dfc6_1620px,#c8e2d6_1950px,#c9e4cd_2150px,#c9e3d2_2500px,#cbe5cd_3100px,#cae1cb_3700px,#cddccb_3840px)]">
      <Sv vb="0 0 40 40" className="ml-[40px] size-[40px]">
        <path d="M0 5.500L16.500 3v16H0zM18 2.800L40 0v19H18zM0 20.500h16.500v16L0 34.500zM18 20.500h22V40l-22-3z" fill="black" />
      </Sv>
      <div className="ml-[40px] flex h-[100px] w-[720px] items-center border-[3px] border-[#ccc] bg-white">
        <Sv vb="0 0 50 50" className="ml-[28px] size-[50px]">
          <circle cx="32" cy="17" r="15" stroke="black" strokeWidth="3.200" />
          <path d="M21.500 28L2 48" stroke="black" strokeWidth="3.200" />
        </Sv>
        <Fit w={324} className="ml-[31px] pt-[2px] text-[36.500px] text-[#2b2b2b]">Type here to search</Fit>
      </div>
      <div className="w-[6.500px]" />
      <Slot run>
        <Sv vb="0 0 56 52" className="h-[52px] w-[56px]">
          <path d="M2 4q0-3 3-3h16l6 6v10H2z" fill="#dfa000" />
          <path d="M2 14h20l5-6h24q3 0 3 3v33H2z" fill="#ffd45c" />
          <path d="M11 51V30q0-6 5-6h24q5 0 5 6v21H36V38H20v13z" fill="#3a96dd" />
        </Sv>
      </Slot>
      <Slot>
        <Sv vb="0 0 60 56" className="h-[56px] w-[60px]">
          <path d="M15 3q0-3 3-3h36q3 0 3 3v30H15z" fill="#0a5fb0" />
          <path d="M31 9h13v12H31z" fill="#28a8ea" /><path d="M44 9h13v12H44z" fill="#50d9ff" /><path d="M31 21h13v12H31z" fill="#0078d4" /><path d="M44 21h13v12H44z" fill="#28a8ea" />
          <path d="M15 28l22 15 21-15v25q0 2-3 2H18q-3 0-3-2z" fill="#1490df" />
          <path d="M58 28L22 55h33q3 0 3-3z" fill="#28a8ea" />
          <rect y="12" width="31" height="31" rx="2.500" fill="#0f6cbd" />
          <ellipse cx="15" cy="27.500" rx="7" ry="7.500" stroke="white" strokeWidth="4.500" />
        </Sv>
      </Slot>
      <Slot>
        <Sv vb="0 0 60 60" className="size-[60px]">
          <ellipse cx="31" cy="18" rx="24" ry="14" transform="rotate(-18 31 18)" fill="#f7f1f1" stroke="#ec8f8f" strokeWidth="1.500" />
          <ellipse cx="20" cy="34" rx="15" ry="9" fill="#f3e6e5" stroke="#ec9a9a" strokeWidth="1.500" />
          <path d="M30 7l8 33M10 20l34 18" stroke="#8b98a5" strokeWidth="3.500" />
          <path d="M20 14l14-4M18 20l16-4" stroke="#c3c8cc" strokeWidth="3" />
          <ellipse cx="48" cy="36" rx="9" ry="6.500" stroke="#1d8fd6" strokeWidth="3.500" />
          <ellipse cx="37" cy="48" rx="5.500" ry="9" stroke="#1d8fd6" strokeWidth="3.500" />
        </Sv>
      </Slot>
      <Slot run>
        <div className="flex size-[60px] items-center justify-center bg-[#d93f26]"><CanvasLogo className="size-[40px]" color="#fff" /></div>
      </Slot>
      <Slot>
        <Sv vb="0 0 60 60" className="size-[60px]">
          <defs>
            <linearGradient id="eg" x1="0" y1=".3" x2="1" y2=".5"><stop stopColor="#1fa5e0" /><stop offset=".5" stopColor="#2cc3d8" /><stop offset="1" stopColor="#5fdc4a" /></linearGradient>
          </defs>
          <path d="M1 26C4 10 16 0 30 0c18 0 30 12 30 25 0 9-7 14-15 14-6 0-9-2-9-4 0-3 2-4 2-8 0-7-6-12-14-12C12 15 4 20 1 26z" fill="url(#eg)" />
          <path d="M1 26c3-6 11-11 20-11 6 0 12 3 14 6-8-2-16 4-16 14 0 12 10 21 22 22-4 2-7 3-11 3C12 60-2 44 1 26z" fill="#0f7bd0" />
          <path d="M23 28c-6 6-3 18 6 24 9 5 20 3 27-5 1-1 0-2-1-1-12 5-28 1-31-10-.8-3 0-6-1-8z" fill="#114f9e" />
        </Sv>
      </Slot>
      <Slot run on>
        <Sv vb="0 0 60 60" className="size-[60px]">
          <circle cx="30" cy="30" r="30" fill="#fbc116" />
          <path d="M4 15a30 30 0 0 1 52 0H30l-13 22z" fill="#e33b2e" />
          <path d="M4 15a30 30 0 0 0 26 45l13-22.500-13 0-11 0z" fill="#229342" />
          <circle cx="30" cy="30" r="15" fill="white" /><circle cx="30" cy="30" r="12" fill="#2f7af0" />
        </Sv>
      </Slot>
      <Slot run>
        <Sv vb="0 0 66 62" className="h-[62px] w-[66px]">
          <path d="M10 16L34 1l26 15v28L34 56H8z" fill="#0a5fc4" />
          <path d="M10 16L34 1l12 7-26 18z" fill="#28a8ea" /><path d="M46 8l14 8v8L36 40z" fill="#0f4fb0" />
          <path d="M8 42h26v13H14q-6 0-6-6z" fill="#0b4f94" />
          <path d="M18 46q0-6 6-6h20v16H22q-4 0-4-4z" fill="#2de3dc" />
          <rect y="13" width="31" height="30" rx="2.500" fill="#1379d3" />
          <ellipse cx="15" cy="28" rx="8" ry="8.500" stroke="white" strokeWidth="4.500" />
          <circle cx="45" cy="42" r="20" fill="#5ac8fa" />
          <rect x="33.500" y="33.500" width="23" height="17" rx="2.500" stroke="black" strokeWidth="3" />
          <path d="M35 36l10 8 10-8" stroke="black" strokeWidth="3" />
        </Sv>
      </Slot>
      <Slot run>
        <Sv vb="0 0 60 60" className="size-[60px]">
          <path d="M1 43l4 3q1 .5 2 0L45 17V0L1 39q-1 2 0 4z" fill="#0072b5" />
          <path d="M1 17l4-3q1-.5 2 0l38 29v17L1 21q-1-2 0-4z" fill="#0093da" />
          <path d="M44 0l14 6q2 1 2 3v42q0 2-2 3l-14 6z" fill="#24a9f2" />
        </Sv>
      </Slot>
      <Slot run>
        <Sv vb="0 0 60 60" className="size-[60px]">
          <circle cx="30" cy="30" r="30" fill="#2b2e3b" />
          <g stroke="#9fc7d2" strokeWidth="1.700">
            <ellipse cx="30" cy="31" rx="20" ry="7.500" transform="rotate(30 30 31)" />
            <ellipse cx="30" cy="31" rx="20" ry="7.500" transform="rotate(90 30 31)" />
            <ellipse cx="30" cy="31" rx="20" ry="7.500" transform="rotate(150 30 31)" />
          </g>
          <g fill="#9fc7d2"><circle cx="30" cy="31" r="1.800" /><circle cx="30" cy="11" r="2.500" /><circle cx="12" cy="42" r="2.500" /><circle cx="48" cy="42" r="2.500" /></g>
        </Sv>
      </Slot>
      <Slot run>
        <div className="flex size-[48px] items-center justify-center rounded-full bg-[#ebebeb] text-[#1e1e1e]"><SiOpenai className="size-[35px]" /></div>
      </Slot>
      <Slot run>
        <Sv vb="0 0 60 56" className="h-[56px] w-[60px]">
          <path d="M14 3q0-3 3-3h39q3 0 3 3v11H14z" fill="#41a5ee" /><path d="M14 14h45v13H14z" fill="#2b7cd3" /><path d="M14 27h45v14H14z" fill="#185abd" /><path d="M14 41h45v11q0 3-3 3H17q-3 0-3-3z" fill="#103f91" />
          <rect y="12" width="31" height="31" rx="2.500" fill="#1a52b5" />
          <path d="M5.500 19l4.500 17 5.500-16 5.500 16 4.500-17" stroke="white" strokeWidth="3.500" />
        </Sv>
      </Slot>
      <Slot run>
        <Sv vb="0 0 60 56" className="h-[56px] w-[60px]">
          <path d="M48 6l6 2v42l-8 4z" fill="#a8763e" />
          <path d="M50 8L36 54l12 1 6-12z" fill="#eef3f4" />
          <path d="M20 4l31 4-14 46L2 40z" fill="#62b4c4" />
          <path d="M20 4l31 4-4 13L8 30z" fill="#b5dde2" />
          <path d="M21 2.500l31 4" stroke="#555" strokeWidth="5" strokeDasharray="2 1.500" />
        </Sv>
      </Slot>
      <div className="ml-auto flex h-[100px] items-center text-black">
        <Sv vb="0 0 34 20" className="h-[20px] w-[34px]"><path d="M1.500 18L17 2l15.500 16" stroke="currentColor" strokeWidth="2.400" /></Sv>
        <Sv vb="0 0 30 38" className="ml-[50px] h-[38px] w-[30px]">
          <rect x="1.500" y="10" width="18" height="18" rx="2.500" stroke="currentColor" strokeWidth="2.200" />
          <path d="M20 18l8-6v14l-8-6M3 4.500q9-5 19 0M3 33.500q9 5 19 0" stroke="currentColor" strokeWidth="2.200" />
        </Sv>
        <Sv vb="0 0 32 32" className="ml-[49px] size-[32px]">
          <path d="M1.500 31C1.500 14 14 1.500 31 1.500M9.500 31C10 18 18 10 31 10M18 31c0-8 5-13 13-13" stroke="currentColor" strokeWidth="2.200" />
          <circle cx="28" cy="28" r="3.200" fill="currentColor" />
        </Sv>
        <Sv vb="0 0 38 30" className="ml-[40px] h-[30px] w-[38px]">
          <path d="M1.500 9h5L13.500 2v26l-7-7h-5zM22 8l14 14M36 8L22 22" stroke="currentColor" strokeWidth="2.200" />
        </Sv>
        <div className="ml-[39px] flex w-[136px] flex-col items-center pt-[1px] text-[29px] leading-[47px]">
          <Fit w={105}>5:48 PM</Fit>
          <Fit w={134}>6/26/2024</Fit>
        </div>
        <div className="relative ml-[45px] size-[40px]">
          <Sv vb="0 0 40 40" className="size-[40px]">
            <path d="M0 0h40v34H24l-6 6-6-6H0z" fill="black" />
            <path d="M8 9h24M8 17h24M8 25h16" stroke="#cfe0cd" strokeWidth="2.500" />
          </Sv>
          <div className="absolute left-[15px] top-[16px] flex size-[46px] items-center justify-center rounded-full border-2 border-[#777] bg-[#d2d4d3]/90 text-[27px] font-medium tracking-tight">12</div>
        </div>
        <div className="ml-[51px] mr-[10px] h-[100px] w-[3px] bg-[#a9b8a9]" />
      </div>
    </div>
  );
}

export default function App() {
  return (
    <div className="flex h-[2160px] w-[3840px] flex-col overflow-hidden bg-white font-['Open_Sans',sans-serif]">
      <TabStrip />
      <AddressBar />
      <Bookmarks />
      <EditorHeader />
      <div className="flex h-[1547px] shrink-0">
        <ListView />
        <Canvas />
        <Inspector />
        <ScrollBar kind="page" />
      </div>
      <Crumbs />
      <Taskbar />
    </div>
  );
}
